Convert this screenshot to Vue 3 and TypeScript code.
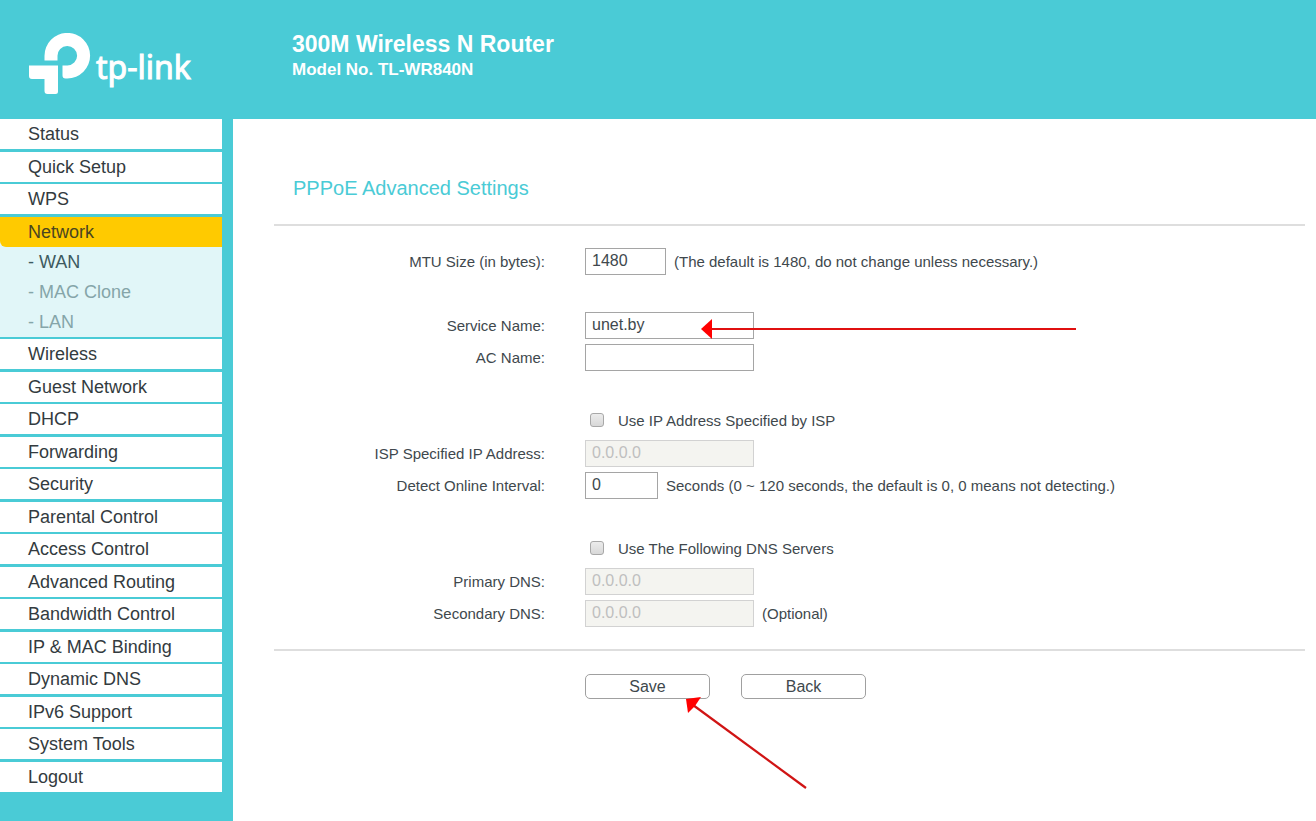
<script setup lang="ts">
import { ref } from 'vue'

interface MenuItem {
  label: string
  active?: boolean
  children?: { label: string; current?: boolean }[]
}

const menu: MenuItem[] = [
  { label: 'Status' },
  { label: 'Quick Setup' },
  { label: 'WPS' },
  {
    label: 'Network',
    active: true,
    children: [{ label: '- WAN', current: true }, { label: '- MAC Clone' }, { label: '- LAN' }],
  },
  { label: 'Wireless' },
  { label: 'Guest Network' },
  { label: 'DHCP' },
  { label: 'Forwarding' },
  { label: 'Security' },
  { label: 'Parental Control' },
  { label: 'Access Control' },
  { label: 'Advanced Routing' },
  { label: 'Bandwidth Control' },
  { label: 'IP & MAC Binding' },
  { label: 'Dynamic DNS' },
  { label: 'IPv6 Support' },
  { label: 'System Tools' },
  { label: 'Logout' },
]

const mtu = ref('1480')
const serviceName = ref('unet.by')
const acName = ref('')
const useIspIp = ref(false)
const ispIp = ref('0.0.0.0')
const interval = ref('0')
const useDns = ref(false)
const primaryDns = ref('0.0.0.0')
const secondaryDns = ref('0.0.0.0')
</script>

<template>
  <div class="page">
    <header class="header">
      <div class="brand">
        <svg class="mark" width="62" height="62" viewBox="0 0 62 62" aria-hidden="true">
          <path
            fill="#fff"
            d="M15.500 27.500V23A22.800 22.800 0 1 1 38.300 45.500H36.500Q33.500 45.500 33.500 42.500V32.500H38.300A9.800 9.800 0 1 0 28.500 23V27.500Z"
          />
          <path
            fill="#fff"
            d="M0 32.500H29V58.500Q29 61 26.500 61H18.500Q15.500 61 15.500 58V46H3Q0 46 0 43Z"
          />
        </svg>
        <span class="wordmark">tp-link</span>
      </div>
      <div class="titles">
        <h1>300M Wireless N Router</h1>
        <p>Model No. TL-WR840N</p>
      </div>
    </header>

    <div class="body">
      <nav class="sidebar">
        <ul class="menu">
          <li v-for="item in menu" :key="item.label">
            <a href="#" :class="{ active: item.active }">{{ item.label }}</a>
            <ul v-if="item.children" class="submenu">
              <li v-for="child in item.children" :key="child.label">
                <a href="#" :class="{ current: child.current }">{{ child.label }}</a>
              </li>
            </ul>
          </li>
        </ul>
      </nav>

      <main class="content">
        <h2>PPPoE Advanced Settings</h2>
        <form @submit.prevent>
          <div class="fields">
            <div class="row group-end">
              <label class="name" for="mtu">MTU Size (in bytes):</label>
              <input id="mtu" v-model="mtu" class="text w-mtu" type="text" />
              <span class="note">(The default is 1480, do not change unless necessary.)</span>
            </div>
            <div class="row">
              <label class="name" for="service">Service Name:</label>
              <div class="anchor">
                <input id="service" v-model="serviceName" class="text" type="text" />
                <svg class="arrow arrow-service" width="376" height="20" viewBox="0 0 376 20" aria-hidden="true">
                  <path d="M10 10H375" stroke="#e01010" stroke-width="2" />
                  <path d="M0 10L11 0V20Z" fill="#f00" />
                </svg>
              </div>
            </div>
            <div class="row group-end">
              <label class="name" for="ac">AC Name:</label>
              <input id="ac" v-model="acName" class="text" type="text" />
            </div>
            <div class="row">
              <label class="check">
                <input v-model="useIspIp" type="checkbox" />Use IP Address Specified by ISP
              </label>
            </div>
            <div class="row">
              <label class="name" for="isp-ip">ISP Specified IP Address:</label>
              <input id="isp-ip" v-model="ispIp" class="text" type="text" :disabled="!useIspIp" />
            </div>
            <div class="row group-end">
              <label class="name" for="interval">Detect Online Interval:</label>
              <input id="interval" v-model="interval" class="text w-interval" type="text" />
              <span class="note">Seconds (0 ~ 120 seconds, the default is 0, 0 means not detecting.)</span>
            </div>
            <div class="row">
              <label class="check">
                <input v-model="useDns" type="checkbox" />Use The Following DNS Servers
              </label>
            </div>
            <div class="row">
              <label class="name" for="dns1">Primary DNS:</label>
              <input id="dns1" v-model="primaryDns" class="text" type="text" :disabled="!useDns" />
            </div>
            <div class="row">
              <label class="name" for="dns2">Secondary DNS:</label>
              <input id="dns2" v-model="secondaryDns" class="text" type="text" :disabled="!useDns" />
              <span class="note">(Optional)</span>
            </div>
          </div>
          <div class="actions">
            <div class="anchor">
              <button type="submit">Save</button>
              <svg class="arrow arrow-save" width="124" height="94" viewBox="0 0 124 94" aria-hidden="true">
                <path d="M8 9L121 92" stroke="#d01414" stroke-width="2.200" />
                <path d="M1 3L16 1L10 10L3 17Z" fill="#f00" />
              </svg>
            </div>
            <button type="button">Back</button>
          </div>
        </form>
      </main>
    </div>
  </div>
</template>

<style>
body {
  margin: 0;
}
</style>

<style scoped>
.page {
  display: flex;
  flex-direction: column;
  min-height: 100vh;
  background: #4acbd6;
  color: #40484d;
  font-family: "Liberation Sans", Arial, sans-serif;
  font-size: 15px;
}
.header {
  display: flex;
  height: 119px;
  color: #fff;
}
.brand {
  display: flex;
  box-sizing: border-box;
  width: 292px;
  padding: 33px 0 0 29px;
}
.mark {
  flex: none;
}
.wordmark {
  margin: 14px 0 0 5px;
  font-family: "Noto Sans", sans-serif;
  font-size: 32px;
  line-height: 40px;
  -webkit-text-stroke: 1px #fff;
}
.titles {
  padding-top: 30px;
}
.titles h1 {
  margin: 0;
  font-size: 23px;
  line-height: 28px;
}
.titles p {
  margin: 0;
  font-size: 17px;
  font-weight: bold;
  line-height: 24px;
}
.body {
  display: flex;
  flex: 1;
}
.sidebar {
  flex: none;
  width: 222px;
  margin-right: 11px;
}
.menu,
.submenu {
  margin: 0;
  padding: 0;
  list-style: none;
}
.menu > li {
  margin-bottom: 2px;
  background: #e1f6f8;
}
.menu > li:nth-child(odd) {
  margin-bottom: 3px;
}
.menu > li:last-child {
  margin-bottom: 0;
}
.menu a {
  display: block;
  padding-left: 28px;
  background: #fff;
  color: #333b40;
  font-size: 18px;
  line-height: 30px;
  text-decoration: none;
}
.menu a.active {
  border-bottom-left-radius: 6px;
  background: #ffca00;
  color: #4a4520;
}
.menu .submenu a {
  background: none;
  color: #85a5a9;
}
.menu .submenu a.current {
  color: #3d5a60;
}
.content {
  flex: 1;
  padding: 0 11px 0 41px;
  background: #fff;
}
h2 {
  margin: 0;
  padding: 54px 0 21px 19px;
  border-bottom: 2px solid #dedede;
  color: #4acbd6;
  font-size: 20px;
  font-weight: normal;
  line-height: 30px;
}
.fields {
  display: flex;
  flex-direction: column;
  gap: 5px;
  padding: 22px 0;
  border-bottom: 2px solid #dedede;
}
.row {
  display: flex;
  align-items: center;
  height: 27px;
}
.group-end {
  margin-bottom: 32px;
}
.name {
  width: 271px;
  margin-right: 40px;
  text-align: right;
}
.text {
  box-sizing: border-box;
  display: block;
  width: 169px;
  height: 27px;
  padding: 0 6px 2px;
  border: 1px solid #a5a5a5;
  border-radius: 0;
  background: #fff;
  color: #40484d;
  font: 16px "Liberation Sans", Arial, sans-serif;
}
.text:disabled {
  border-color: #d2d2d2;
  background: #f4f4f0;
  color: #bfbfbf;
}
.w-mtu {
  width: 81px;
}
.w-interval {
  width: 73px;
}
.note {
  margin-left: 8px;
  padding-bottom: 1px;
}
.check {
  display: flex;
  align-items: center;
  margin-left: 316px;
  padding-bottom: 2px;
}
.check input {
  box-sizing: border-box;
  width: 14px;
  height: 14px;
  margin: 0 14px 2px 0;
  border: 1px solid #a8a8a8;
  border-radius: 3px;
  appearance: none;
  background: linear-gradient(#ececec, #d8d8d8);
}
.check input:checked {
  background: #4acbd6;
}
.actions {
  display: flex;
  gap: 31px;
  padding: 23px 0 0 311px;
}
button {
  display: block;
  width: 125px;
  height: 25px;
  padding: 0;
  border: 1px solid #a0a0a0;
  border-radius: 5px;
  background: #fff;
  color: #40484d;
  font: 16px "Liberation Sans", Arial, sans-serif;
}
.anchor {
  position: relative;
}
.arrow {
  position: absolute;
  fill: none;
  pointer-events: none;
}
.arrow-service {
  top: 7px;
  left: 116px;
}
.arrow-save {
  top: 22px;
  left: 100px;
}
</style>
